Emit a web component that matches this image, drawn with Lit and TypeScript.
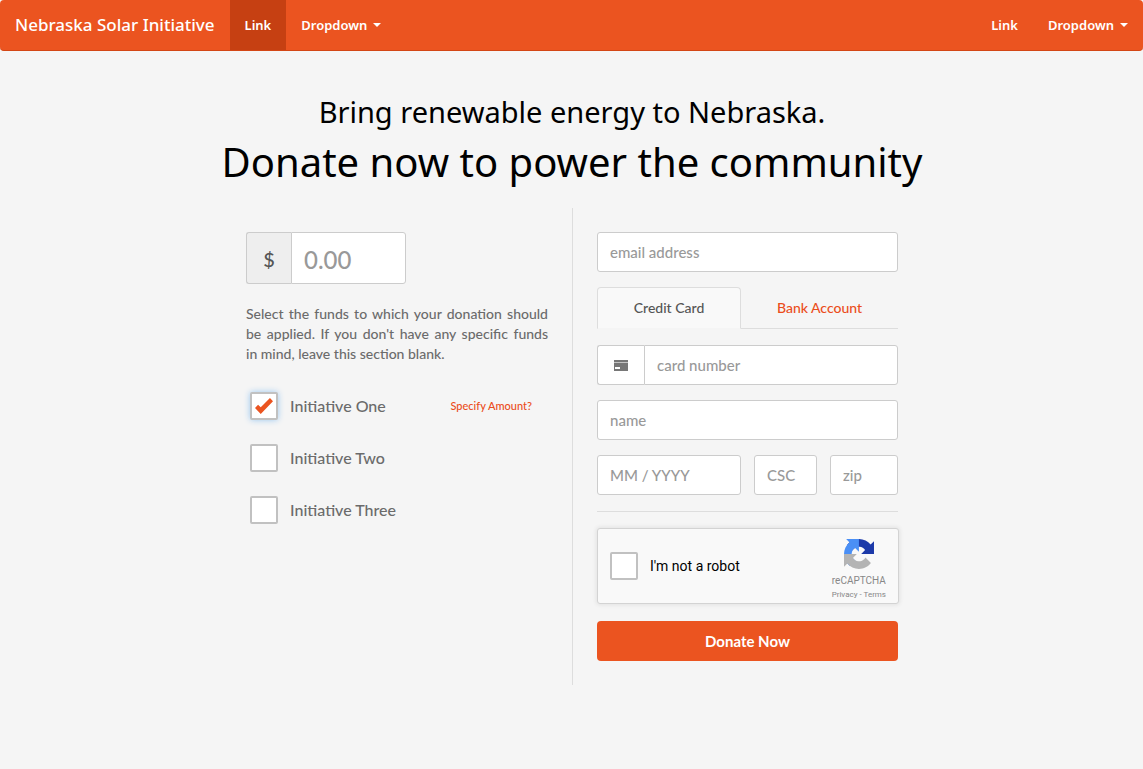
import { LitElement, html, css, svg } from "lit";
import { customElement, state } from "lit/decorators.js";

interface Fund {
  id: string;
  label: string;
  checked: boolean;
}

@customElement("site-nav")
export class SiteNav extends LitElement {
  static styles = css`
    :host {
      display: block;
      font-family: "Noto Sans", "Open Sans", sans-serif;
    }
    .bar {
      display: flex;
      justify-content: space-between;
      background: #eb5420;
      border-bottom: 1px solid #d34615;
      border-radius: 4px;
    }
    .group {
      display: flex;
    }
    .brand,
    .item {
      display: flex;
      align-items: center;
      height: 50px;
      padding: 0 15px;
      border: 0;
      background: none;
      color: #fff;
      font: 600 13px/20px "Noto Sans", "Open Sans", sans-serif;
      text-decoration: none;
      white-space: nowrap;
      cursor: pointer;
    }
    .brand {
      font-size: 17px;
      font-weight: 500;
    }
    .active {
      background: #c64012;
    }
    .caret {
      margin-left: 6px;
      border-top: 4px solid #fff;
      border-left: 4px solid transparent;
      border-right: 4px solid transparent;
    }
  `;

  render() {
    return html`
      <nav class="bar">
        <div class="group">
          <a class="brand" href="#">Nebraska Solar Initiative</a>
          <a class="item active" href="#" aria-current="page">Link</a>
          <button class="item" type="button" aria-haspopup="true">
            Dropdown<span class="caret"></span>
          </button>
        </div>
        <div class="group">
          <a class="item" href="#">Link</a>
          <button class="item" type="button" aria-haspopup="true">
            Dropdown<span class="caret"></span>
          </button>
        </div>
      </nav>
    `;
  }
}

const cardIcon = svg`
  <rect x="0" y="0" width="14" height="11" fill="#777"></rect>
  <rect x="0" y="2" width="14" height="1" fill="#c4c4c4"></rect>
  <rect x="1" y="7" width="5" height="2" fill="#fff"></rect>
`;

const captchaLogo = svg`
  <path fill="#1c3aa9" d="M64 31.955l-.033-1.37V4.687l-7.16 7.16C50.948 4.674 42.033.093 32.05.093c-10.4 0-19.622 4.96-25.458 12.64l11.736 11.86a15.55 15.55 0 0 1 4.754-5.334c2.05-1.6 4.952-2.906 8.968-2.906.485 0 .86.057 1.135.163 4.976.393 9.288 3.14 11.828 7.124l-8.307 8.307L64 31.953"></path>
  <path fill="#4a8ff5" d="M31.862.094l-1.37.033H4.594l7.16 7.16C4.58 13.147 0 22.06 0 32.046c0 10.4 4.96 19.622 12.64 25.458L24.5 45.768a15.55 15.55 0 0 1-5.334-4.754c-1.6-2.05-2.906-4.952-2.906-8.968 0-.485.057-.86.163-1.135.393-4.976 3.14-9.288 7.124-11.828l8.307 8.307L31.86.095"></path>
  <path fill="#b4b4b4" d="M.001 32.045l.033 1.37v25.898l7.16-7.16c5.86 7.173 14.774 11.754 24.76 11.754 10.4 0 19.622-4.96 25.458-12.64l-11.736-11.86a15.55 15.55 0 0 1-4.754 5.334c-2.05 1.6-4.952 2.906-8.968 2.906-.485 0-.86-.057-1.135-.163-4.976-.393-9.288-3.14-11.828-7.124l8.307-8.307c-10.522.04-22.4.066-27.295-.005"></path>
`;

@customElement("app-root")
export class AppRoot extends LitElement {
  @state() private funds: Fund[] = [
    { id: "one", label: "Initiative One", checked: true },
    { id: "two", label: "Initiative Two", checked: false },
    { id: "three", label: "Initiative Three", checked: false },
  ];

  static styles = css`
    :host {
      display: block;
      min-height: 100vh;
      background: #f5f5f5;
      color: #6b6b6b;
      font: 500 14px/20px Lato, sans-serif;
    }
    *,
    *::before {
      box-sizing: border-box;
    }
    .page {
      padding: 39px 0 40px 1px;
    }
    .lead,
    .headline {
      margin: 0;
      color: #000;
      font-family: "Noto Sans", "Open Sans", sans-serif;
      font-weight: 400;
      text-align: center;
    }
    .lead {
      font-size: 29px;
      line-height: 44px;
    }
    .headline {
      font-size: 40px;
      line-height: 56px;
      margin-bottom: 18px;
    }
    .columns {
      display: grid;
      grid-template-columns: 1fr 1fr;
      max-width: 652px;
      margin: 0 auto;
    }
    .left {
      padding: 24px 24px 24px 0;
    }
    .right {
      display: flex;
      flex-direction: column;
      padding: 24px 0 24px 24px;
      border-left: 1px solid #ddd;
    }
    .field {
      width: 100%;
      min-width: 0;
      height: 40px;
      padding: 0 12px;
      border: 1px solid #ccc;
      border-radius: 3px;
      background: #fff;
      color: #555;
      font: 500 15px/20px Lato, sans-serif;
    }
    .field::placeholder {
      color: #999;
      opacity: 1;
    }
    .group {
      display: flex;
    }
    .group .field {
      flex: 1;
      border-top-left-radius: 0;
      border-bottom-left-radius: 0;
    }
    .addon {
      display: flex;
      align-items: center;
      justify-content: center;
      width: 47px;
      border: 1px solid #ccc;
      border-right: 0;
      border-radius: 3px 0 0 3px;
      background: #fff;
    }
    .amount {
      max-width: 160px;
    }
    .amount .field {
      height: 52px;
      padding-top: 2px;
      font-size: 24px;
    }
    .amount .addon {
      width: 45px;
      padding-top: 2px;
      background: #eee;
      color: #555;
      font-size: 20px;
    }
    .hint {
      margin: 20px 0 28px;
      text-align: justify;
    }
    .funds {
      display: flex;
      flex-direction: column;
      gap: 24px;
      margin: 0;
      padding: 0 16px 0 4px;
      list-style: none;
    }
    .fund {
      display: flex;
      align-items: center;
      justify-content: space-between;
    }
    .choice {
      display: flex;
      align-items: center;
      gap: 12px;
      font-size: 16px;
    }
    .box {
      appearance: none;
      display: grid;
      place-items: center;
      width: 28px;
      height: 28px;
      margin: 0;
      border: 2px solid #c1c1c1;
      border-radius: 2px;
      background: #fff;
    }
    .fund .box:checked {
      box-shadow: 0 0 6px #9cc8f0;
    }
    .box:checked::before {
      content: "";
      width: 18px;
      height: 16px;
      background: #eb5420;
      clip-path: polygon(0 62%, 17% 42%, 32% 58%, 83% 0, 100% 21%, 32% 100%);
    }
    .specify {
      color: #eb4d1b;
      font-size: 11px;
      text-decoration: none;
    }
    .tabs {
      display: grid;
      grid-template-columns: 144fr 157fr;
      height: 42px;
      margin: 15px 0 16px;
    }
    .tab {
      padding: 0;
      border: 0;
      border-bottom: 1px solid #ddd;
      background: none;
      color: #eb4d1b;
      font: 500 14px/20px Lato, sans-serif;
    }
    .tab.selected {
      border: 1px solid #ddd;
      border-bottom-color: #f5f5f5;
      border-radius: 4px 4px 0 0;
      background: #f9f9f9;
      color: #555;
    }
    .stack {
      display: flex;
      flex-direction: column;
      gap: 15px;
    }
    .trio {
      display: grid;
      grid-template-columns: 144fr 63fr 68fr;
      gap: 13px;
    }
    .rule {
      width: 100%;
      height: 1px;
      margin: 16px 0;
      border: 0;
      background: #ddd;
    }
    .captcha {
      display: flex;
      align-items: center;
      justify-content: space-between;
      height: 76px;
      margin-right: -1px;
      padding: 0 12px;
      border: 1px solid #d3d3d3;
      border-radius: 3px;
      background: #f9f9f9;
      box-shadow: 0 0 4px 1px rgba(0, 0, 0, 0.08);
      font-family: Roboto, sans-serif;
    }
    .robot {
      display: flex;
      align-items: center;
      gap: 12px;
      color: #000;
      font-size: 14px;
      font-weight: 400;
    }
    .badge {
      display: flex;
      flex-direction: column;
      align-items: center;
      padding-top: 9px;
      color: #888;
      font-size: 10px;
      font-weight: 400;
      line-height: 14px;
    }
    .badge-name {
      margin-top: 5px;
    }
    .legal {
      font-size: 8px;
    }
    .legal a {
      color: inherit;
      text-decoration: none;
    }
    .donate {
      height: 40px;
      margin-top: 17px;
      border: 0;
      border-radius: 4px;
      background: #eb5420;
      color: #fff;
      font: 700 15px/20px Lato, sans-serif;
    }
  `;

  private toggle(id: string) {
    this.funds = this.funds.map((f) =>
      f.id === id ? { ...f, checked: !f.checked } : f
    );
  }

  private renderFund(fund: Fund) {
    return html`
      <li class="fund">
        <label class="choice">
          <input
            class="box"
            type="checkbox"
            .checked=${fund.checked}
            @change=${() => this.toggle(fund.id)}
          />
          ${fund.label}
        </label>
        ${fund.checked
          ? html`<a class="specify" href="#">Specify Amount?</a>`
          : null}
      </li>
    `;
  }

  render() {
    return html`
      <site-nav></site-nav>
      <main class="page">
        <h2 class="lead">Bring renewable energy to Nebraska.</h2>
        <h1 class="headline">Donate now to power the community</h1>
        <form class="columns" @submit=${(e: Event) => e.preventDefault()}>
          <section class="left">
            <div class="group amount">
              <label class="addon" for="amount">$</label>
              <input class="field" id="amount" placeholder="0.00" inputmode="decimal" />
            </div>
            <p class="hint">
              Select the funds to which your donation should be applied. If you
              don't have any specific funds in&nbsp;mind, leave this section blank.
            </p>
            <ul class="funds">
              ${this.funds.map((f) => this.renderFund(f))}
            </ul>
          </section>
          <section class="right">
            <input class="field" type="email" placeholder="email address" aria-label="email address" />
            <div class="tabs" role="tablist">
              <button class="tab selected" type="button" role="tab" aria-selected="true">Credit Card</button>
              <button class="tab" type="button" role="tab" aria-selected="false">Bank Account</button>
            </div>
            <div class="stack">
              <div class="group">
                <label class="addon" for="card" aria-label="card number">
                  <svg width="14" height="11" viewBox="0 0 14 11">${cardIcon}</svg>
                </label>
                <input class="field" id="card" placeholder="card number" />
              </div>
              <input class="field" placeholder="name" aria-label="name" />
              <div class="trio">
                <input class="field" placeholder="MM / YYYY" aria-label="expiry date" />
                <input class="field" placeholder="CSC" aria-label="CSC" />
                <input class="field" placeholder="zip" aria-label="zip" />
              </div>
            </div>
            <hr class="rule" />
            <div class="captcha">
              <label class="robot">
                <input class="box" type="checkbox" />
                I'm not a robot
              </label>
              <div class="badge">
                <svg width="30" height="30" viewBox="0 0 64 64">${captchaLogo}</svg>
                <span class="badge-name">reCAPTCHA</span>
                <span class="legal"><a href="#">Privacy</a> - <a href="#">Terms</a></span>
              </div>
            </div>
            <button class="donate" type="submit">Donate Now</button>
          </section>
        </form>
      </main>
    `;
  }
}
